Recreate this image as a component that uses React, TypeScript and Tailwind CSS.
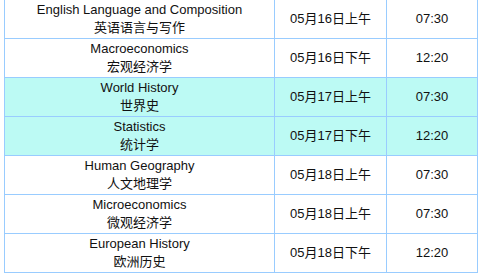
import React from 'react';

type Exam = {
    en: string;
    zh: string;
    date: string;
    time: string;
    hl?: boolean;
};

const exams: Exam[] = [
    { en: 'English Language and Composition', zh: '英语语言与写作', date: '05月16日上午', time: '07:30' },
    { en: 'Macroeconomics', zh: '宏观经济学', date: '05月16日下午', time: '12:20' },
    { en: 'World History', zh: '世界史', date: '05月17日上午', time: '07:30', hl: true },
    { en: 'Statistics', zh: '统计学', date: '05月17日下午', time: '12:20', hl: true },
    { en: 'Human Geography', zh: '人文地理学', date: '05月18日上午', time: '07:30' },
    { en: 'Microeconomics', zh: '微观经济学', date: '05月18日上午', time: '07:30' },
    { en: 'European History', zh: '欧洲历史', date: '05月18日下午', time: '12:20' },
];

export default function App() {
    return (
        <div className="w-[478px] h-[278px] overflow-hidden bg-white">
            <table
                className="ml-[4px] mt-[-1px] w-[473px] border-collapse text-[13px] leading-[18px] text-[#111]"
                style={{ fontFamily: '"Liberation Sans", Arial, "Noto Sans CJK SC", sans-serif', tableLayout: 'fixed' }}
            >
                <colgroup>
                    <col className="w-[270px]" />
                    <col className="w-[112px]" />
                    <col className="w-[91px]" />
                </colgroup>
                <tbody>
                    {exams.map((e) => (
                        <tr key={e.en} className={e.hl ? 'bg-[#bcfaf4]' : 'bg-white'}>
                            <td className="h-[39px] border border-[#99ccff] p-0 text-center align-middle">
                                <div>{e.en}</div>
                                <div>{e.zh}</div>
                            </td>
                            <td className="h-[39px] border border-[#99ccff] p-0 text-center align-middle">{e.date}</td>
                            <td className="h-[39px] border border-[#99ccff] p-0 text-center align-middle">{e.time}</td>
                        </tr>
                    ))}
                </tbody>
            </table>
        </div>
    );
}
